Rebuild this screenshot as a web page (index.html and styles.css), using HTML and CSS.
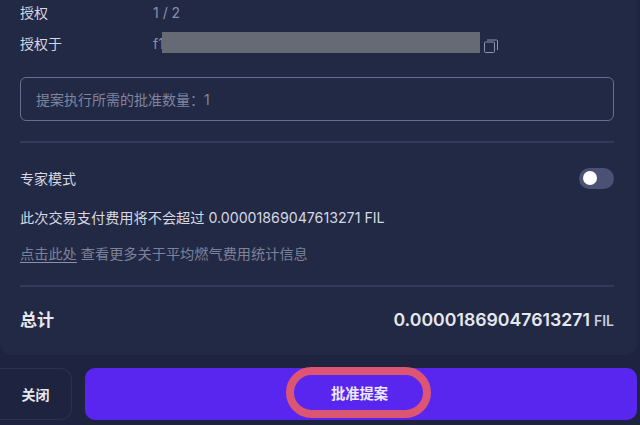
FILE: index.html
```html
<!DOCTYPE html>
<html lang="zh-CN">
<head>
    <meta charset="UTF-8">
    <meta name="viewport" content="width=device-width, initial-scale=1.0">
    <title>批准提案</title>
    <link rel="stylesheet" href="styles.css">
</head>
<body>
    <div class="panel">
        <div class="card">
            <div class="info-row first">
                <span class="info-label">授权</span>
                <span class="info-value">1 / 2</span>
            </div>
            <div class="info-row second">
                <span class="info-label">授权于</span>
                <span class="info-value address">
                    f1
                    <span class="redacted"></span>
                </span>
                <svg class="copy-icon" viewBox="0 0 14 14" fill="none" stroke="currentColor" stroke-width="1">
                    <rect x="0.5" y="3" width="10" height="10.5" rx="1"></rect>
                    <path d="M3 1h9.5a1 1 0 0 1 1 1v9"></path>
                </svg>
            </div>
            <div class="approval-box">提案执行所需的批准数量：1</div>
            <div class="expert-row">
                <span class="info-label">专家模式</span>
                <span class="toggle"><span class="toggle-knob"></span></span>
            </div>
            <p class="fee-line">此次交易支付费用将不会超过 0.00001869047613271 FIL</p>
            <p class="help-line"><a href="#" class="help-link">点击此处</a> 查看更多关于平均燃气费用统计信息</p>
            <div class="total-row">
                <span class="total-label">总计</span>
                <span class="total-value">0.00001869047613271<small>FIL</small></span>
            </div>
        </div>
        <div class="actions">
            <button class="button close-button">关闭</button>
            <button class="button approve-button">
                <span class="approve-ring">批准提案</span>
            </button>
        </div>
    </div>
</body>
</html>
```

FILE: styles.css
```css
* {
    margin: 0;
    padding: 0;
    box-sizing: border-box;
}

:root {
    --bg-footer: #1e2440;
    --bg-card: #222945;
    --line: #323a59;
    --border: #666e91;
    --text-primary: #e6e8ee;
    --text-muted: #8b90a6;
    --purple: #5926f0;
    --ring: #dc5674;
}

html, body {
    width: 640px;
    height: 425px;
    overflow: hidden;
}

body {
    font-family: Inter, "Noto Sans CJK SC", sans-serif;
    background: var(--bg-footer);
    color: var(--text-primary);
    font-size: 14px;
}

.panel {
    display: flex;
    flex-direction: column;
    height: 425px;
}

.card {
    height: 355px;
    width: 637px;
    padding: 0 23px 0 20px;
    background: var(--bg-card);
    border-radius: 0 0 12px 12px;
}

.info-row {
    display: flex;
    align-items: center;
    height: 20px;
}

.info-row.first {
    margin-top: 2px;
}

.info-row.second {
    margin-top: 11px;
}

.info-label {
    width: 133px;
    font-size: 14px;
    color: #d5d8e2;
}

.info-value {
    color: var(--text-muted);
    font-size: 14px;
}

.address {
    position: relative;
    width: 327px;
}

.redacted {
    position: absolute;
    left: 9px;
    top: -3px;
    width: 318px;
    height: 21px;
    background: #656a75;
}

.copy-icon {
    width: 14px;
    height: 14px;
    margin-top: 5px;
    margin-left: 4px;
    color: #8d93ad;
}

.approval-box {
    display: flex;
    align-items: center;
    height: 44px;
    margin-top: 24px;
    padding-left: 15px;
    border: 1px solid var(--border);
    border-radius: 6px;
    color: #80859d;
    font-size: 14px;
}

.expert-row {
    display: flex;
    justify-content: space-between;
    align-items: center;
    height: 60px;
    margin-top: 20px;
    padding-top: 14px;
    padding-bottom: 2px;
    border-top: 2px solid var(--line);
}

.toggle {
    display: flex;
    align-items: center;
    width: 35px;
    height: 21px;
    padding-left: 4px;
    background: #4a5175;
    border-radius: 11px;
}

.toggle-knob {
    width: 14px;
    height: 14px;
    background: #fff;
    border-radius: 50%;
}

.fee-line {
    margin-top: 7px;
    height: 20px;
    line-height: 20px;
    font-size: 14.2px;
    color: #d5d8e2;
}

.help-line {
    margin-top: 16px;
    height: 20px;
    line-height: 20px;
    font-size: 14.2px;
    color: #7d8299;
}

.help-link {
    color: #7d8299;
    text-decoration: none;
    border-bottom: 1px solid #8b90a6;
}

.total-row {
    display: flex;
    justify-content: space-between;
    align-items: center;
    height: 66px;
    margin-top: 21px;
    border-top: 2px solid var(--line);
}

.total-label {
    padding-bottom: 2px;
    font-size: 17px;
    font-weight: 700;
    color: #e6e8ee;
}

.total-value {
    font-size: 17.7px;
    font-weight: 600;
    color: #e6e8ee;
}

.total-value small {
    margin-left: 4px;
    font-size: 14px;
    font-weight: 600;
    color: #c9ccd8;
}

.actions {
    display: flex;
    gap: 13px;
    margin-top: 13px;
}

.button {
    height: 52px;
    border: none;
    font-family: inherit;
    font-size: 14px;
    color: var(--text-primary);
}

.close-button {
    width: 72px;
    background: transparent;
    border: 1px solid #2b3250;
    border-left: none;
    border-radius: 0 12px 12px 0;
    font-weight: 600;
}

.approve-button {
    display: flex;
    justify-content: center;
    align-items: center;
    width: 552px;
    padding-right: 6px;
    background: var(--purple);
    border-radius: 10px;
}

.approve-ring {
    display: flex;
    justify-content: center;
    align-items: center;
    width: 145px;
    height: 51px;
    margin-top: -4px;
    padding-left: 3px;
    border: 8px solid var(--ring);
    border-radius: 26px;
    font-size: 14.3px;
    font-weight: 600;
    color: #ece8fb;
}
```
